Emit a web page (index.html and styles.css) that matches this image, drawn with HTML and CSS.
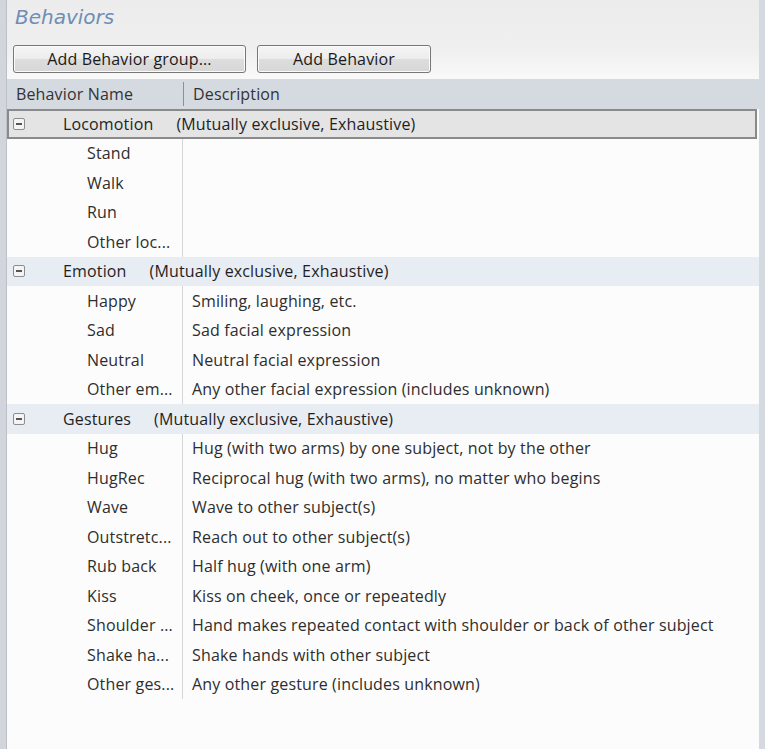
FILE: index.html
```html
<!DOCTYPE html>
<html>
<head>
<meta charset="utf-8">
<link rel="stylesheet" href="styles.css">
</head>
<body>
<div class="app">
  <div class="leftbar"></div>
  <div class="main">
    <div class="toppanel">
      <h1 class="title">Behaviors</h1>
      <div class="buttons">
        <button class="btn btn-group">Add Behavior group...</button>
        <button class="btn btn-behavior">Add Behavior</button>
      </div>
    </div>
    <div class="header">
      <div class="h-name">Behavior Name</div>
      <div class="h-sep"></div>
      <div class="h-desc">Description</div>
    </div>
    <div class="list">
      <div class="group selected">
        <span class="toggle"></span>
        <span class="g-name">Locomotion</span>
        <span class="g-info">(Mutually exclusive, Exhaustive)</span>
      </div>
      <div class="row"><div class="name">Stand</div><div class="desc"></div></div>
      <div class="row"><div class="name">Walk</div><div class="desc"></div></div>
      <div class="row"><div class="name">Run</div><div class="desc"></div></div>
      <div class="row"><div class="name">Other loc...</div><div class="desc"></div></div>

      <div class="group">
        <span class="toggle"></span>
        <span class="g-name">Emotion</span>
        <span class="g-info">(Mutually exclusive, Exhaustive)</span>
      </div>
      <div class="row"><div class="name">Happy</div><div class="desc">Smiling, laughing, etc.</div></div>
      <div class="row"><div class="name">Sad</div><div class="desc">Sad facial expression</div></div>
      <div class="row"><div class="name">Neutral</div><div class="desc">Neutral facial expression</div></div>
      <div class="row"><div class="name">Other em...</div><div class="desc">Any other facial expression (includes unknown)</div></div>

      <div class="group">
        <span class="toggle"></span>
        <span class="g-name">Gestures</span>
        <span class="g-info">(Mutually exclusive, Exhaustive)</span>
      </div>
      <div class="row"><div class="name">Hug</div><div class="desc">Hug (with two arms) by one subject, not by the other</div></div>
      <div class="row"><div class="name">HugRec</div><div class="desc">Reciprocal hug (with two arms), no matter who begins</div></div>
      <div class="row"><div class="name">Wave</div><div class="desc">Wave to other subject(s)</div></div>
      <div class="row"><div class="name">Outstretc...</div><div class="desc">Reach out to other subject(s)</div></div>
      <div class="row"><div class="name">Rub back</div><div class="desc">Half hug (with one arm)</div></div>
      <div class="row"><div class="name">Kiss</div><div class="desc">Kiss on cheek, once or repeatedly</div></div>
      <div class="row"><div class="name">Shoulder ...</div><div class="desc">Hand makes repeated contact with shoulder or back of other subject</div></div>
      <div class="row"><div class="name">Shake ha...</div><div class="desc">Shake hands with other subject</div></div>
      <div class="row"><div class="name">Other ges...</div><div class="desc">Any other gesture (includes unknown)</div></div>
    </div>
  </div>
</div>
</body>
</html>
```

FILE: styles.css
```css
* { box-sizing: border-box; }
html, body { margin: 0; padding: 0; }
body {
  width: 765px;
  height: 749px;
  overflow: hidden;
  font-family: "Open Sans", "DejaVu Sans", sans-serif;
  font-size: 16px;
  letter-spacing: 0.15px;
  color: #2e2e2e;
  background: #fcfcfc;
}
.app {
  display: flex;
  height: 749px;
}
.leftbar {
  width: 7px;
  flex: none;
  background: #d2d6dc;
  border-right: 1px solid #bcc1c8;
}
.main {
  flex: 1;
  display: flex;
  flex-direction: column;
  border-right: 6px solid #d5d9e0;
  background: #fcfcfc;
}
.toppanel {
  height: 79px;
  background: linear-gradient(#ececec, #efefef 60%, #f9f9f9);
  padding: 3px 0 0 6px;
}
.title {
  margin: 0 0 0 2px;
  font-family: "DejaVu Sans", sans-serif;
  font-style: italic;
  font-weight: normal;
  font-size: 20px;
  letter-spacing: 0;
  color: #6f8db6;
  line-height: 28px;
}
.buttons {
  display: flex;
  gap: 11px;
  margin-top: 14px;
}
.btn {
  height: 28px;
  border: 1px solid #777;
  border-radius: 3px;
  background: linear-gradient(#f5f5f5, #ededed 48%, #dddddd 52%, #d7d7d7);
  box-shadow: inset 0 0 0 1px #fbfbfb;
  font-family: "Open Sans", "DejaVu Sans", sans-serif;
  font-size: 16px;
  letter-spacing: 0.15px;
  color: #1a1a1a;
  padding: 0;
  line-height: 24px;
}
.btn-group { width: 233px; }
.btn-behavior { width: 174px; }
.header {
  height: 30px;
  background: #d5d9e0;
  display: flex;
  align-items: center;
  margin-right: -6px;
}
.h-name {
  width: 176px;
  padding-left: 9px;
  color: #333;
}
.h-sep {
  width: 1px;
  height: 24px;
  background: #8c8f95;
}
.h-desc {
  padding-left: 9px;
  color: #333;
}
.list {
  display: flex;
  flex-direction: column;
}
.group {
  height: 29.5px;
  display: flex;
  align-items: center;
  background: #e8ecf3;
  padding-left: 6px;
  color: #1f1f1f;
}
.group.selected {
  background: #e4e4e4;
  border: 2px solid #8a8a8a;
  padding-left: 4px;
  margin-right: 2px;
}
.toggle {
  width: 12px;
  height: 12px;
  border: 1px solid #8d8d8d;
  border-radius: 2px;
  background: #f4f4f4;
  position: relative;
  flex: none;
}
.toggle::after {
  content: "";
  position: absolute;
  left: 2px;
  right: 2px;
  top: 4px;
  height: 2px;
  background: #555;
}
.g-name {
  margin-left: 38px;
}
.g-info {
  margin-left: 23px;
}
.row {
  height: 29.5px;
  display: flex;
  align-items: center;
}
.name {
  width: 176px;
  padding-left: 80px;
  border-right: 1px solid #d6d6d6;
  height: 100%;
  display: flex;
  align-items: center;
  white-space: nowrap;
  overflow: hidden;
}
.desc {
  padding-left: 9px;
  white-space: nowrap;
}
```
